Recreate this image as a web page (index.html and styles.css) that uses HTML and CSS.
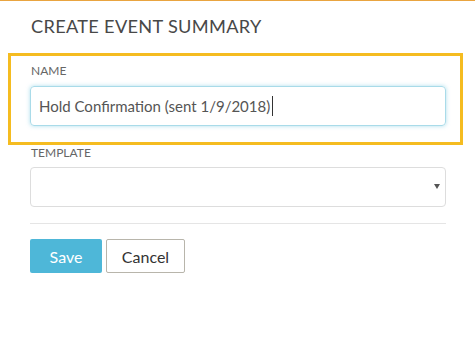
FILE: index.html
```html
<!DOCTYPE html>
<html>
<head>
<meta charset="utf-8">
<link rel="stylesheet" href="styles.css">
</head>
<body>
<div class="page">
  <h1 class="title">CREATE EVENT SUMMARY</h1>
  <div class="form">
    <div class="highlight">
      <label class="label">NAME</label>
      <div class="input">Hold Confirmation (sent 1/9/2018)<span class="caret"></span></div>
    </div>
    <label class="label label-template">TEMPLATE</label>
    <div class="select"><span class="arrow"></span></div>
    <div class="divider"></div>
    <div class="actions">
      <button class="btn btn-save">Save</button>
      <button class="btn btn-cancel">Cancel</button>
    </div>
  </div>
</div>
</body>
</html>
```
FILE: styles.css
```css
html, body {
  margin: 0;
  padding: 0;
  background: #fff;
}
body {
  font-family: Lato, "Open Sans", sans-serif;
  width: 475px;
  height: 338px;
  overflow: hidden;
}
.page {
  border-top: 1px solid #e9a440;
  padding: 0 29px 0 30px;
}
.title {
  margin: 0;
  padding: 13px 0 0 1px;
  font-size: 18.2px;
  font-weight: 400;
  letter-spacing: 0.3px;
  color: #484848;
  line-height: 24px;
}
.form {
  width: 416px;
  display: flex;
  flex-direction: column;
}
.highlight {
  margin: 15px -17px 0 -22px;
  padding: 8px 14px 16px 19px;
  border: 3px solid #f5bc20;
  display: flex;
  flex-direction: column;
}
.label {
  display: block;
  font-size: 12px;
  line-height: 14px;
  color: #666;
  padding-left: 1px;
  margin-bottom: 8px;
}
.label-template {
  margin-top: 1px;
  margin-bottom: 7px;
}
.input {
  height: 38px;
  border: 1px solid #a9dbe9;
  border-radius: 4px;
  box-shadow: 0 0 4px rgba(120, 200, 225, 0.6);
  display: flex;
  align-items: center;
  padding-left: 8px;
  font-size: 15px;
  color: #555;
}
.caret {
  display: inline-block;
  width: 1px;
  height: 20px;
  background: #333;
  margin-left: 2px;
}
.select {
  height: 38px;
  border: 1px solid #ddd;
  border-radius: 4px;
  position: relative;
}
.arrow {
  position: absolute;
  right: 5px;
  top: 16px;
  width: 0;
  height: 0;
  border-left: 3px solid transparent;
  border-right: 3px solid transparent;
  border-top: 5px solid #555;
}
.divider {
  height: 1px;
  background: #e5e5e5;
  margin-top: 16px;
}
.actions {
  display: flex;
  gap: 4px;
  margin-top: 15px;
}
.btn {
  height: 34px;
  font-family: Lato, "Open Sans", sans-serif;
  font-size: 16px;
  border-radius: 2px;
  padding: 0;
}
.btn-save {
  width: 72px;
  background: #4eb7d8;
  border: none;
  color: #fff;
}
.btn-cancel {
  width: 79px;
  background: #fff;
  border: 1px solid #b8b5ab;
  color: #333;
}
```
